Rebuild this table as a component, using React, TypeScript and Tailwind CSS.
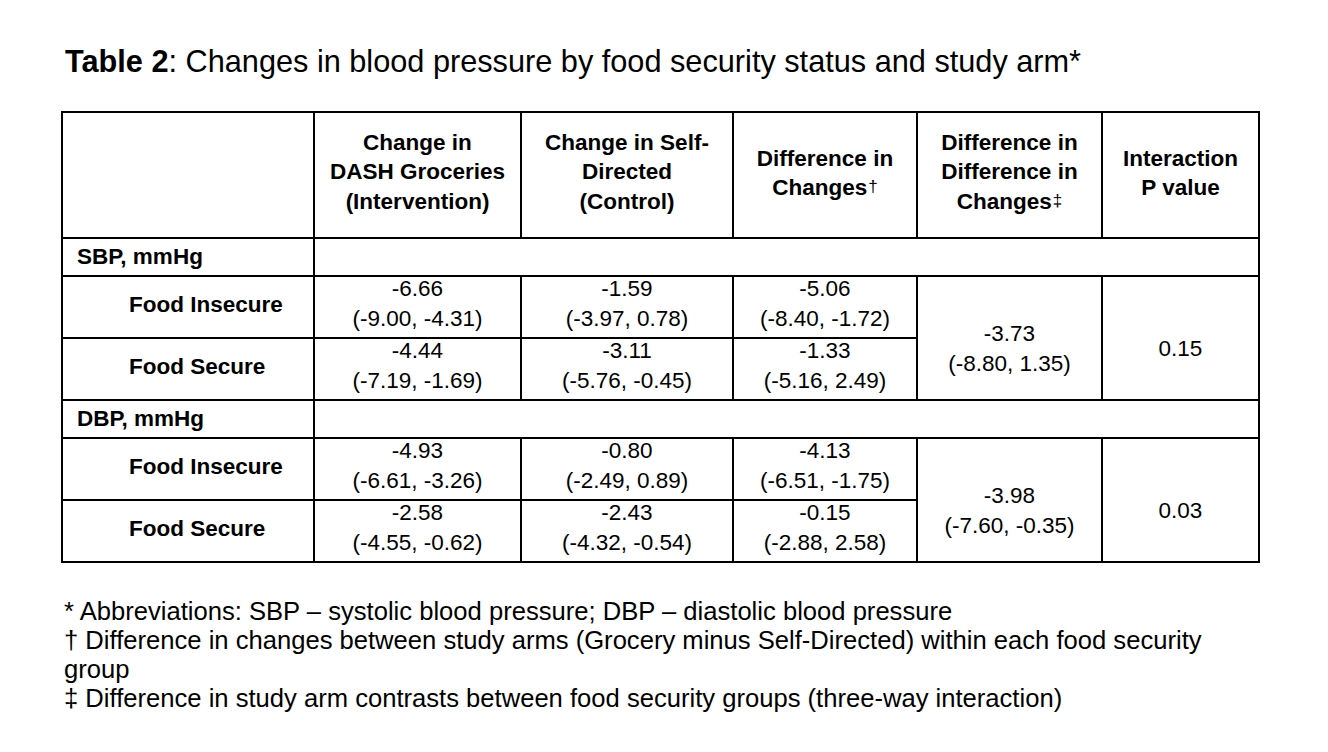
import React from "react";

const font = { fontFamily: '"Liberation Sans", Arial, Helvetica, sans-serif' };

type Pair = [string, string];

function Val({ v }: { v: Pair }) {
  return (
    <td className="border-2 border-black p-0 align-top text-center">
      <div className="-mt-[3px] leading-[30px]">
        <div>{v[0]}</div>
        <div>{v[1]}</div>
      </div>
    </td>
  );
}

function Merged({ v }: { v: Pair }) {
  return (
    <td rowSpan={2} className="border-2 border-black p-0 pt-[22px] align-middle text-center">
      <div className="leading-[30px]">
        <div>{v[0]}</div>
        <div>{v[1]}</div>
      </div>
    </td>
  );
}

function PCell({ v }: { v: string }) {
  return (
    <td rowSpan={2} className="border-2 border-black p-0 pt-[22px] align-middle text-center leading-[30px]">
      {v}
    </td>
  );
}

function Label({ t }: { t: string }) {
  return (
    <td className="border-2 border-black p-0 pl-[66px] pb-[5px] align-middle text-left font-bold leading-[30px]">
      {t}
    </td>
  );
}

function Group({ t }: { t: string }) {
  return (
    <>
      <td className="border-2 border-black p-0 pl-[14px] align-middle text-left font-bold leading-[30px]">{t}</td>
      <td colSpan={5} className="border-2 border-black p-0"></td>
    </>
  );
}

function Block({
  label,
  fi,
  fs,
  dd,
  p,
}: {
  label: string;
  fi: Pair[];
  fs: Pair[];
  dd: Pair;
  p: string;
}) {
  return (
    <>
      <tr className="h-[38px]">
        <Group t={label} />
      </tr>
      <tr className="h-[62px]">
        <Label t="Food Insecure" />
        <Val v={fi[0]} />
        <Val v={fi[1]} />
        <Val v={fi[2]} />
        <Merged v={dd} />
        <PCell v={p} />
      </tr>
      <tr className="h-[62px]">
        <Label t="Food Secure" />
        <Val v={fs[0]} />
        <Val v={fs[1]} />
        <Val v={fs[2]} />
      </tr>
    </>
  );
}

function Sup({ c }: { c: string }) {
  return <sup className="text-[17px] font-normal relative -top-[3px] pl-[1px]">{c}</sup>;
}

export default function App() {
  return (
    <div className="w-[1328px] h-[752px] bg-white text-black overflow-hidden" style={font}>
      <div className="pt-[46px] pl-[65px] text-[30.7px] leading-[32px] whitespace-nowrap">
        <span className="font-bold">Table 2</span>: Changes in blood pressure by food security status and study arm*
      </div>
      <div className="pl-[61px] pt-[33px]">
        <table className="table-fixed border-collapse border-2 border-black w-[1199px] text-[22.5px]">
          <colgroup>
            <col className="w-[252px]" />
            <col className="w-[207px]" />
            <col className="w-[212px]" />
            <col className="w-[184px]" />
            <col className="w-[185px]" />
            <col className="w-[157px]" />
          </colgroup>
          <tbody>
            <tr className="h-[126px]">
              <td className="border-2 border-black p-0"></td>
              <td className="border-2 border-black p-0 pb-[6px] align-middle text-center font-bold leading-[29.5px]">
                Change in
                <br />
                DASH Groceries
                <br />
                (Intervention)
              </td>
              <td className="border-2 border-black p-0 pb-[6px] align-middle text-center font-bold leading-[29.5px]">
                Change in Self-
                <br />
                Directed
                <br />
                (Control)
              </td>
              <td className="border-2 border-black p-0 pb-[4px] align-middle text-center font-bold leading-[29.5px]">
                Difference in
                <br />
                Changes<Sup c="†" />
              </td>
              <td className="border-2 border-black p-0 pb-[6px] align-middle text-center font-bold leading-[29.5px]">
                Difference in
                <br />
                Difference in
                <br />
                Changes<Sup c="‡" />
              </td>
              <td className="border-2 border-black p-0 pb-[4px] align-middle text-center font-bold leading-[29.5px]">
                Interaction
                <br />
                P value
              </td>
            </tr>
            <Block
              label="SBP, mmHg"
              fi={[
                ["-6.66", "(-9.00, -4.31)"],
                ["-1.59", "(-3.97, 0.78)"],
                ["-5.06", "(-8.40, -1.72)"],
              ]}
              fs={[
                ["-4.44", "(-7.19, -1.69)"],
                ["-3.11", "(-5.76, -0.45)"],
                ["-1.33", "(-5.16, 2.49)"],
              ]}
              dd={["-3.73", "(-8.80, 1.35)"]}
              p="0.15"
            />
            <Block
              label="DBP, mmHg"
              fi={[
                ["-4.93", "(-6.61, -3.26)"],
                ["-0.80", "(-2.49, 0.89)"],
                ["-4.13", "(-6.51, -1.75)"],
              ]}
              fs={[
                ["-2.58", "(-4.55, -0.62)"],
                ["-2.43", "(-4.32, -0.54)"],
                ["-0.15", "(-2.88, 2.58)"],
              ]}
              dd={["-3.98", "(-7.60, -0.35)"]}
              p="0.03"
            />
          </tbody>
        </table>
      </div>
      <div className="pl-[64px] pt-[34px] text-[25.6px] leading-[29px] whitespace-nowrap">
        <div>* Abbreviations: SBP – systolic blood pressure; DBP – diastolic blood pressure</div>
        <div>
          † Difference in changes between study arms (Grocery minus Self-Directed) within each food security
          <br />
          group
        </div>
        <div>‡ Difference in study arm contrasts between food security groups (three-way interaction)</div>
      </div>
    </div>
  );
}
